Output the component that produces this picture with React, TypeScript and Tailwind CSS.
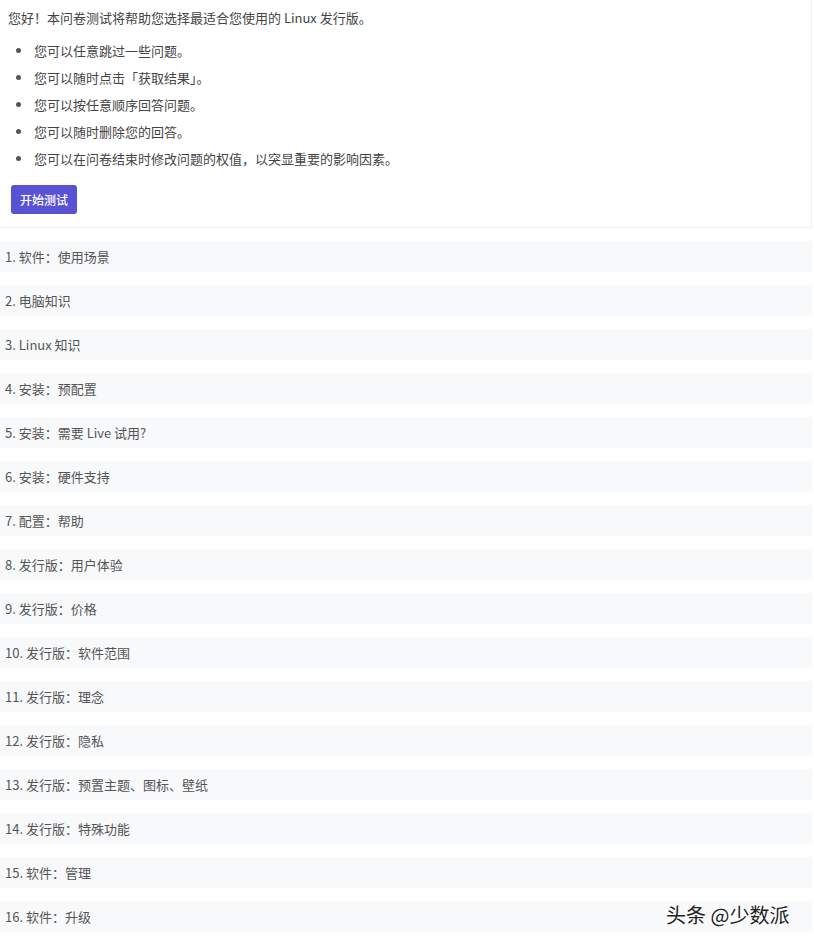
import React from "react";

const rows = [
  "1. 软件：使用场景",
  "2. 电脑知识",
  "3. Linux 知识",
  "4. 安装：预配置",
  "5. 安装：需要 Live 试用?",
  "6. 安装：硬件支持",
  "7. 配置：帮助",
  "8. 发行版：用户体验",
  "9. 发行版：价格",
  "10. 发行版：软件范围",
  "11. 发行版：理念",
  "12. 发行版：隐私",
  "13. 发行版：预置主题、图标、壁纸",
  "14. 发行版：特殊功能",
  "15. 软件：管理",
  "16. 软件：升级",
];

const bullets = [
  "您可以任意跳过一些问题。",
  "您可以随时点击「获取结果」。",
  "您可以按任意顺序回答问题。",
  "您可以随时删除您的回答。",
  "您可以在问卷结束时修改问题的权值，以突显重要的影响因素。",
];

export default function App() {
  return (
    <div
      className="relative w-[814px] h-[945px] overflow-hidden bg-white text-[13px] text-[#444]"
      style={{ fontFamily: '"Noto Sans CJK SC", "Noto Sans", sans-serif' }}
    >
      <div className="w-[812px] bg-white border-r border-b border-[#f1f2f4] pt-[8px] pb-[13px] pl-[8px]">
        <p className="leading-[20px]">您好！本问卷测试将帮助您选择最适合您使用的 Linux 发行版。</p>
        <ul className="mt-[9px]">
          {bullets.map((b) => (
            <li key={b} className="flex items-center h-[27px] leading-[27px]">
              <span className="w-[5px] h-[5px] rounded-full bg-[#555] ml-[8px] mr-[13px]" />
              <span>{b}</span>
            </li>
          ))}
        </ul>
        <button className="mt-[13px] ml-[3px] h-[29px] w-[66px] rounded-[3px] bg-[#5a52d5] text-white text-[12px] font-medium leading-[29px]">
          开始测试
        </button>
      </div>
      <div className="flex flex-col gap-[13px] mt-[13px]">
        {rows.map((r) => (
          <div
            key={r}
            className="w-[812px] h-[31px] bg-[#f8f9fa] flex items-center pl-[5px] text-[13px] text-[#555]"
          >
            {r}
          </div>
        ))}
      </div>
      <div
        className="absolute left-[666px] top-[900px] text-[20px] text-[#222] leading-[30px]"
        style={{ textShadow: "0 0 2px #fff, 0 0 2px #fff, 1px 1px 1px #fff" }}
      >
        头条 @少数派
      </div>
    </div>
  );
}
